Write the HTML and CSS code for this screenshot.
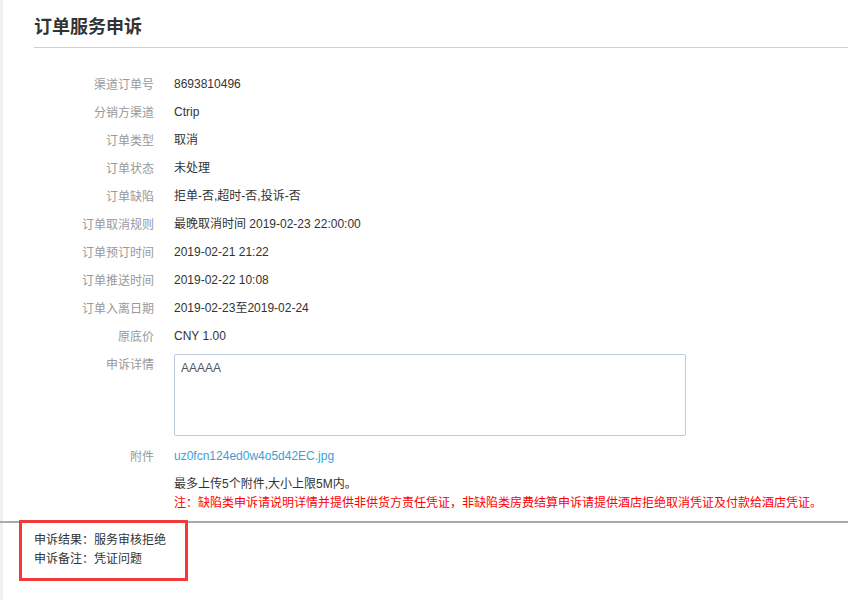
FILE: index.html
```html
<!DOCTYPE html>
<html lang="zh-CN">
<head>
    <meta charset="UTF-8">
    <title>订单服务申诉</title>
    <link rel="stylesheet" href="styles.css">
</head>
<body>
    <div class="page">
        <div class="header">
            <h1 class="title">订单服务申诉</h1>
        </div>

        <div class="form">
            <div class="label">渠道订单号</div>
            <div class="value">8693810496</div>

            <div class="label">分销方渠道</div>
            <div class="value">Ctrip</div>

            <div class="label">订单类型</div>
            <div class="value">取消</div>

            <div class="label">订单状态</div>
            <div class="value">未处理</div>

            <div class="label">订单缺陷</div>
            <div class="value">拒单-否,超时-否,投诉-否</div>

            <div class="label">订单取消规则</div>
            <div class="value">最晚取消时间 2019-02-23 22:00:00</div>

            <div class="label">订单预订时间</div>
            <div class="value">2019-02-21 21:22</div>

            <div class="label">订单推送时间</div>
            <div class="value">2019-02-22 10:08</div>

            <div class="label">订单入离日期</div>
            <div class="value">2019-02-23至2019-02-24</div>

            <div class="label">原底价</div>
            <div class="value">CNY 1.00</div>

            <div class="label">申诉详情</div>
            <div class="value">
                <textarea class="detail" readonly>AAAAA</textarea>
            </div>

            <div class="label">附件</div>
            <div class="value"><a class="file-link" href="#">uz0fcn124ed0w4o5d42EC.jpg</a></div>

            <div class="label"></div>
            <div class="tips">
                <p>最多上传5个附件,大小上限5M内。</p>
                <p class="warn">注：缺陷类申诉请说明详情并提供非供货方责任凭证，非缺陷类房费结算申诉请提供酒店拒绝取消凭证及付款给酒店凭证。</p>
            </div>
        </div>

        <div class="result">
            <div class="mark"></div>
            <p>申诉结果：服务审核拒绝</p>
            <p>申诉备注：凭证问题</p>
        </div>
    </div>
</body>
</html>
```

FILE: styles.css
```css
html, body {
    margin: 0;
    height: 100%;
    background: #fff;
}
body {
    font-family: "Liberation Sans", "Noto Sans CJK SC", sans-serif;
    font-size: 12px;
    color: #333;
}
.page {
    min-height: 100%;
    border-left: 3px solid #eef0f3;
    padding-left: 31px;
    box-sizing: border-box;
}
.header {
    height: 48px;
    box-sizing: border-box;
    padding-top: 13px;
    border-bottom: 1px solid #cfcfcf;
}
.title {
    margin: 0;
    font-family: "Noto Sans CJK SC", sans-serif;
    font-size: 18px;
    line-height: 24px;
    font-weight: bold;
    color: #333;
}
.form {
    display: grid;
    grid-template-columns: 120px 1fr;
    column-gap: 20px;
    padding-top: 22px;
}
.label {
    text-align: right;
    line-height: 28px;
    color: #999;
    font-family: "Noto Sans CJK SC", sans-serif;
}
.value {
    line-height: 28px;
    color: #333;
}
.detail {
    display: block;
    width: 512px;
    height: 82px;
    margin: 4px 0 6px;
    padding: 5px 6px;
    box-sizing: border-box;
    border: 1px solid #bfcbd9;
    border-radius: 2px;
    font-family: "Liberation Sans", sans-serif;
    font-size: 12px;
    line-height: 16px;
    color: #555;
    resize: none;
    outline: none;
}
.file-link {
    color: #3c9fd6;
    text-decoration: none;
}
.tips {
    padding-top: 5px;
}
.tips p {
    margin: 0;
    line-height: 18px;
    white-space: nowrap;
}
.tips .warn {
    color: #f00;
    font-family: "Noto Sans CJK SC", sans-serif;
}
.result {
    position: relative;
    margin-top: 10px;
    margin-left: -34px;
    padding: 6px 0 0 34px;
    border-top: 2px solid #aaa;
    font-family: "Noto Sans CJK SC", sans-serif;
}
.result p {
    position: relative;
    z-index: 1;
    margin: 0;
    line-height: 19px;
    color: #333;
}
.mark {
    position: absolute;
    left: 19px;
    top: -3px;
    width: 169px;
    height: 61px;
    box-sizing: border-box;
    border: 3px solid #f23a3a;
    background: #fff;
}
```
